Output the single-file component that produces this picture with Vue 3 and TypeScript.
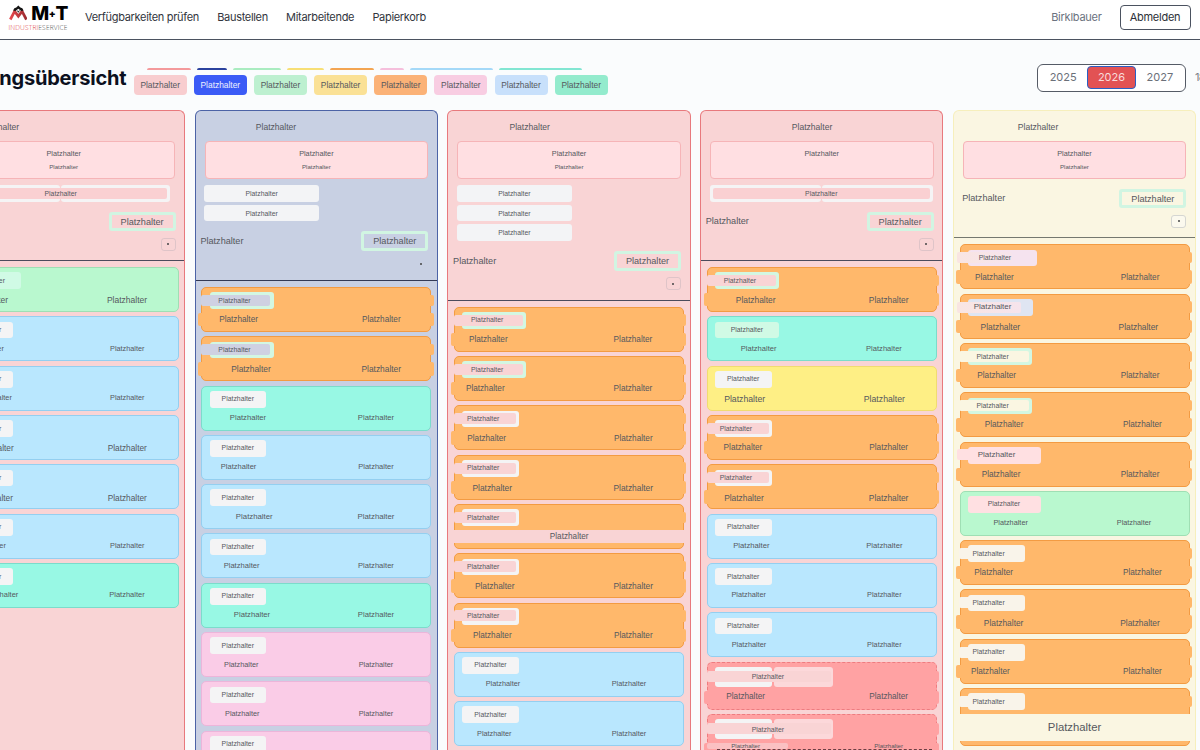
<script setup lang="ts">
interface Legend { tone: string; line: number }
interface Badge { tone: string; width: number; text: number; size?: number; patch?: string; patchEnd?: number; patchStart?: number }
interface Card {
  tone: string
  badge: Badge
  left?: number
  leftSize?: number
  right?: number
  rightSize?: number
  band?: number
}
interface Column {
  tone: string
  title: number
  subtitle: boolean
  slots: number
  wide?: number
  labelX: number
  cards: Card[]
}

const word = 'Platzhalter'
const navigation = ['Verfügbarkeiten prüfen', 'Baustellen', 'Mitarbeitende', 'Papierkorb']

const legend: Legend[] = [
  { tone: 'rose', line: 44.5 },
  { tone: 'royal', line: 30 },
  { tone: 'mint', line: 48 },
  { tone: 'sun', line: 37 },
  { tone: 'amber', line: 43.7 },
  { tone: 'candy', line: 24 },
  { tone: 'sky', line: 83.3 },
  { tone: 'aqua', line: 83.2 },
]

const plain = (): Badge => ({ tone: 'gray', width: 56.4, text: 36.3 })
const mintPlain = (): Badge => ({ tone: 'mintsoft', width: 64, text: 40 })
const mintCut = (text = 33): Badge => ({ tone: 'mint', width: 64, text, patch: 'base', patchEnd: 69 })
const grayCut = (): Badge => ({ tone: 'gray', width: 56.4, text: 29, patch: 'base', patchEnd: 62 })
const creamCut = (): Badge => ({ tone: 'ivory', width: 57, text: 29, patch: 'ivory', patchEnd: 30 })

const card = (tone: string, badge: Badge, left: number, leftSize: number, right: number, rightSize = leftSize): Card =>
  ({ tone, badge, left, leftSize, right, rightSize })

const columns: Column[] = [
  {
    tone: 'red', title: 57, subtitle: true, slots: 0, wide: 218, labelX: 6,
    cards: [
      card('green', mintPlain(), 39.4, 8.5, 178.4),
      card('blue', plain(), 38, 7.3, 178.7),
      card('blue', plain(), 46, 7.3, 178.7),
      card('blue', plain(), 45.5, 8.3, 178.7),
      card('blue', plain(), 44.8, 8.3, 178.7),
      card('blue', plain(), 40, 7.3, 178.7),
      card('teal', plain(), 52, 7.5, 178.4),
    ],
  },
  {
    tone: 'navy', title: 81.3, subtitle: true, slots: 2, labelX: 6,
    cards: [
      card('orange', mintCut(), 37.3, 8.2, 180),
      card('orange', mintCut(), 49.7, 8.4, 180),
      card('teal', plain(), 46.7, 7.7, 174.7),
      card('blue', plain(), 37.3, 7.5, 174.7),
      card('blue', plain(), 53, 7.8, 174.7),
      card('blue', plain(), 40.3, 7.6, 174.7),
      card('teal', plain(), 50.7, 7.7, 174.7),
      card('pink', plain(), 40, 7.3, 174.7),
      card('pink', plain(), 41, 7.3, 174.7),
      card('pink', plain(), 41, 7.3, 174.7),
    ],
  },
  {
    tone: 'red', title: 82.3, subtitle: true, slots: 3, labelX: 6,
    cards: [
      card('orange', mintCut(), 34.3, 8.2, 179),
      card('orange', mintCut(), 31.3, 8.2, 179),
      card('orange', grayCut(), 32.7, 8.2, 179.3),
      card('orange', grayCut(), 38.3, 8.4, 179.3),
      { tone: 'orange', badge: grayCut(), band: 8.2 },
      card('orange', grayCut(), 40.7, 8.4, 179.3),
      card('orange', grayCut(), 38.3, 8.2, 179.3),
      card('blue', plain(), 49, 7.3, 175),
      card('blue', plain(), 40.3, 7.3, 175),
    ],
  },
  {
    tone: 'red', title: 112, subtitle: false, slots: 0, wide: 223, labelX: 6,
    cards: [
      card('orange', mintCut(), 49, 8.4, 182),
      card('teal', mintPlain(), 52, 7.6, 177.3),
      card('yellow', plain(), 38, 8.7, 177.7),
      card('orange', grayCut(), 36.3, 8.2, 182),
      card('orange', grayCut(), 37.3, 8.4, 182),
      card('blue', plain(), 44.7, 7.7, 177.7),
      card('blue', plain(), 42, 7.3, 177.7),
      card('blue', plain(), 42.3, 7.3, 177.7),
      card('coral', { tone: 'gray', width: 56.7, text: 61, patch: 'base', patchEnd: 124 }, 39, 8.2, 182),
      card('coral', { tone: 'gray', width: 56.7, text: 61, patch: 'base', patchEnd: 124 }, 39, 6.1, 182),
    ],
  },
  {
    tone: 'cream', title: 85.3, subtitle: true, slots: 0, labelX: 9.7,
    cards: [
      card('orange', { tone: 'lilac', width: 69, text: 35.3, patch: 'blush', patchStart: -3, patchEnd: 52 }, 35, 8.2, 180.7),
      card('orange', { tone: 'ice', width: 65, text: 33, size: 8, patch: 'blush', patchStart: -3, patchEnd: 61 }, 41, 8.4, 179),
      card('orange', mintCut(), 37.3, 8.2, 180.7),
      card('orange', mintCut(), 44.7, 8.2, 183),
      card('orange', { tone: 'rosy', width: 73, text: 37, size: 8, patch: 'rosy', patchStart: -3, patchEnd: 30 }, 41.7, 8.2, 180.7),
      card('green', { tone: 'rosy', width: 73, text: 44.3 }, 51.3, 7.3, 174.7),
      card('orange', creamCut(), 34.3, 8.2, 183),
      card('orange', creamCut(), 44.3, 8.4, 180.7),
      card('orange', creamCut(), 31, 8.2, 183),
      { tone: 'orange', badge: creamCut(), band: 11.3 },
    ],
  },
]

const px = (value: number): string => `${value}px`
const isTall = (item: Card): boolean => (item.band ?? 0) > 10
const hasTabs = (item: Card): boolean => item.tone === 'orange' || item.tone === 'coral'
const badgeText = (badge: Badge) => ({ marginLeft: px(badge.text - 39.3), fontSize: px(badge.size ?? 6.85) })
const patchBox = (badge: Badge) => ({
  left: px((badge.patchStart ?? -0.3) - 1),
  width: px((badge.patchEnd ?? 0) - (badge.patchStart ?? -0.3)),
})
const leftText = (item: Card) => ({ marginLeft: px((item.left ?? 0) - 31.2), fontSize: px(item.leftSize ?? 8) })
const rightText = (item: Card) => ({
  marginLeft: px((item.right ?? 0) - (item.left ?? 0) - 60),
  fontSize: px(item.rightSize ?? 8),
})
</script>

<template>
  <div class="page">
    <header class="topbar">
      <div class="brand">
        <div class="brand-main">
          <svg class="mark" viewBox="0 0 20 16" preserveAspectRatio="none" aria-hidden="true">
            <defs>
              <linearGradient id="roof" x1="0" y1="0" x2="1" y2="0">
                <stop offset="0" stop-color="#e5484d" />
                <stop offset="1" stop-color="#9c2b30" />
              </linearGradient>
            </defs>
            <path d="M1.4 15 L6 6.6 L10 11.6 L14 6.6 L18.6 15" fill="none" stroke="url(#roof)" stroke-width="2.9" />
            <path d="M4.4 5.6 Q5.4 2.9 7.8 2.6 L10 .4 L12.2 2.6 Q14.6 2.9 15.6 5.6 L13.2 6.2 L10 3.8 L6.8 6.2 Z" fill="#151515" />
            <path d="M7.8 5.2 L10 7.9 L12.2 5.2 L10 6.2 Z" fill="#333" />
          </svg>
          <span class="brand-name">M<i>+</i>T</span>
        </div>
        <div class="brand-sub"><span>INDUSTRI</span>ESERVICE</div>
      </div>
      <nav class="nav">
        <a v-for="entry in navigation" :key="entry">{{ entry }}</a>
      </nav>
      <span class="user">Birklbauer</span>
      <button class="logout">Abmelden</button>
    </header>

    <section class="toolbar">
      <h1><span>Planungsübersicht</span></h1>
      <div class="legend">
        <div class="lines">
          <span v-for="entry in legend" :key="entry.tone" :class="['line', entry.tone]" :style="{ width: px(entry.line) }" />
        </div>
        <div class="pills">
          <span v-for="entry in legend" :key="entry.tone" :class="['pill', entry.tone]">{{ word }}</span>
        </div>
      </div>
      <div class="years">
        <span>2025</span><span class="active">2026</span><span>2027</span>
      </div>
      <span class="week">18</span>
    </section>

    <main class="board">
      <section v-for="(column, index) in columns" :key="index" :class="['column', column.tone]">
        <header class="column-head">
          <div class="title-row"><span :style="{ marginLeft: px(column.title - 31) }">{{ word }}</span></div>
          <div class="notice">
            <span>{{ word }}</span>
            <small v-if="column.subtitle">{{ word }}</small>
          </div>
          <div v-if="column.slots" class="slots">
            <span v-for="slot in column.slots" :key="slot" class="slot">{{ word }}</span>
          </div>
          <div v-if="column.wide" class="pair" :style="{ width: px(column.wide) }">
            <span /><span />
            <div class="pair-label">{{ word }}</div>
          </div>
          <div class="summary" :style="{ paddingLeft: px(column.labelX - 1.3) }">
            <span>{{ word }}</span>
            <span class="count">{{ word }}</span>
          </div>
          <button class="toggle"><i /></button>
        </header>

        <div class="cards">
          <article v-for="(item, n) in column.cards" :key="n" :class="['card', item.tone, { tall: isTall(item) }]">
            <template v-if="hasTabs(item)">
              <i class="tab upper" />
              <i v-if="!item.band" class="tab lower" />
            </template>
            <div class="badges">
              <div :class="['badge', item.badge.tone]" :style="{ width: px(item.badge.width) }" />
              <div v-if="item.tone === 'coral'" class="badge second" />
            </div>
            <i v-if="item.badge.patch" :class="['patch', item.badge.patch]" :style="patchBox(item.badge)" />
            <span class="badge-text"><b :style="badgeText(item.badge)">{{ word }}</b></span>
            <div v-if="item.band" class="band" :style="{ fontSize: px(item.band) }">{{ word }}</div>
            <div v-else :class="['texts', { compact: (item.leftSize ?? 8) < 8, clipped: item.leftSize === 6.1 }]">
              <span :style="leftText(item)">{{ word }}</span>
              <span :style="rightText(item)">{{ word }}</span>
            </div>
          </article>
        </div>
      </section>
    </main>
  </div>
</template>

<style>
html, body { margin: 0; overflow: hidden; }
</style>

<style scoped>
.page {
  width: 1200px;
  height: 750px;
  overflow: hidden;
  display: flex;
  flex-direction: column;
  background: #fafcfd;
  color: #55585e;
  font-family: "Liberation Sans", Arial, sans-serif;
}
.page * { box-sizing: border-box; }
button { font: inherit; padding: 0; }

.topbar {
  flex: none;
  height: 40px;
  padding: 0 9.5px 5px 8.5px;
  display: flex;
  align-items: center;
  background: #fff;
  border-bottom: 1.4px solid #4b5260;
  font-family: Inter, sans-serif;
  font-size: 11px;
  color: #31353d;
}
.brand { width: 59.5px; height: 26px; flex: none; margin-top: 2px; }
.brand-main { display: flex; height: 18.5px; align-items: flex-start; }
.mark { width: 19px; height: 15.5px; }
.brand-name { margin-left: 4px; font-size: 19px; line-height: 17px; height: 17px; font-weight: 800; color: #000; letter-spacing: -.3px; display: flex; }
.brand-name i { font-size: 10px; font-style: normal; line-height: 16px; font-weight: 900; }
.brand-sub { font: 300 6.6px/8px "Open Sans", sans-serif; color: #555; white-space: nowrap; letter-spacing: .17px; }
.brand-sub span { color: #dd4348; }
.nav { display: flex; gap: 18.2px; margin-left: 17px; flex: 1; letter-spacing: -.31px; }
.user { color: #6b7280; margin-right: 17.8px; letter-spacing: -.24px; }
.logout { width: 71px; height: 25px; border: 1px solid #4b5260; border-radius: 4px; background: #fff; color: #2c3038; letter-spacing: -.25px; }

.toolbar { flex: none; height: 70px; display: flex; align-items: flex-start; }
h1 { margin: 25px 0 0; width: 126.4px; flex: none; display: flex; justify-content: flex-end; color: #0b1020; font: 700 20px/26px Inter, sans-serif; letter-spacing: -.2px; }
.legend { margin: 28.3px 0 0 7.3px; }
.lines { display: flex; gap: 5.9px; padding-left: 13.3px; height: 7px; }
.line { height: 2px; border-radius: 2px 2px 0 0; }
.line.rose { background: #f49a9c; }
.line.royal { background: #2b429e; }
.line.mint { background: #a9ecc0; }
.line.sun { background: #f7df76; }
.line.amber { background: #f3a552; }
.line.candy { background: #f5bfdc; }
.line.sky { background: #a4d9f8; }
.line.aqua { background: #82e6d2; }
.pills { display: flex; gap: 7.15px; }
.pill { width: 53px; height: 19.3px; border-radius: 4px; font-size: 8.4px; line-height: 20.3px; text-align: center; }
.pill.rose { background: #f8cdcf; }
.pill.royal { background: #3b5bf6; color: #eef1ff; }
.pill.mint { background: #bdf0d0; }
.pill.sun { background: #fae196; }
.pill.amber { background: #fbb277; }
.pill.candy { background: #f8cde2; }
.pill.sky { background: #c8e0fb; }
.pill.aqua { background: #93ebcd; }
.years {
  margin: 24px 0 0 auto;
  width: 149px;
  height: 27.5px;
  padding: 1px;
  display: flex;
  align-items: center;
  border: 1.4px solid #555b66;
  border-radius: 6px;
  background: #fff;
  color: #6b7079;
  font: 11px/21px Inter, sans-serif;
}
.years span { width: 49px; text-align: center; }
.years .active { border: 1.4px solid #2a5fc4; border-radius: 4px; background: #e25254; color: #f8dcdc; }
.week { width: 5px; margin: 27px 0 0 9px; overflow: hidden; font: 11px/21px Inter, sans-serif; letter-spacing: -.8px; color: #7b808a; }

.board { flex: 1; display: flex; gap: 9.4px; margin-left: -58px; min-height: 0; }
.column { flex: none; width: 243.3px; border: 1px solid; border-bottom: 0; border-radius: 6px 6px 0 0; height: 660px; }
.column.red { --base: #f9d4d5; background: var(--base); border-color: #e8797d; }
.column.navy { --base: #c8d0e3; background: var(--base); border-color: #4c63a6; }
.column.cream { --base: #faf6e2; background: var(--base); border-color: #f6efbc; }
.column-head { padding: 10px 0 9.3px; border-bottom: 1.4px solid #4b4b5c; }
.column.navy .column-head { border-color: #333a55; }
.column.cream .column-head { border-color: #74786f; }
.title-row { height: 19.5px; font-size: 8.55px; line-height: 13.5px; }
.title-row span { display: block; width: 60px; text-align: center; }
.notice {
  width: 223.6px;
  height: 38.3px;
  margin-left: 8.9px;
  padding-top: 5px;
  display: flex;
  flex-direction: column;
  align-items: center;
  border: 1.5px solid #f6b4b7;
  border-radius: 4px;
  background: #ffdfe2;
  font-size: 7.3px;
  line-height: 13px;
}
.notice small { font-size: 6.1px; line-height: 13.8px; }
.slots { margin: 6px 0 0 8.7px; display: flex; flex-direction: column; gap: 3px; }
.slot { width: 114.5px; height: 16.8px; border-radius: 3px; background: #f3f4f6; font-size: 6.85px; line-height: 17px; text-align: center; }
.pair { position: relative; margin: 6px 0 0 8.7px; height: 16.8px; display: flex; gap: 1px; }
.pair > span { flex: 1; border-radius: 3px; background: #f5f4f5; }
.pair-label { position: absolute; inset: 2.8px 3px; border-radius: 2px; background: #fad0d2; font-size: 6.85px; line-height: 11.2px; text-align: center; }
.summary { margin-top: 10px; padding-right: 8.7px; height: 19.4px; display: flex; justify-content: space-between; align-items: center; font-size: 9.15px; }
.count { width: 67px; height: 19.4px; border: 3px solid #d1f5e2; border-radius: 3px; line-height: 14px; text-align: center; }
.toggle { display: flex; align-items: center; justify-content: center; width: 15px; height: 13px; margin: 6.7px 8.7px 0 auto; border: 1px solid rgba(130, 140, 155, .22); border-radius: 3px; background: transparent; }
.column.navy .toggle { border-color: transparent; }
.column.cream .toggle { border-color: #d5d6d2; background: #fbf9ee; }
.toggle i { width: 2px; height: 2px; background: #444; border-radius: 1px; }

.cards { display: flex; flex-direction: column; gap: 4.3px; padding: 6.2px 0 0 5.8px; }
.card { position: relative; flex: none; width: 230px; height: 45px; border: 1px solid var(--edge); border-radius: 5px; background: var(--fill); }
.card.orange { --fill: #ffb86b; --edge: #f39b42; }
.card.blue { --fill: #b9e7fe; --edge: #94cff0; }
.card.teal { --fill: #98f8e4; --edge: #7bdccb; }
.card.green { --fill: #b9f8cf; --edge: #9fdfb4; }
.card.pink { --fill: #facce7; --edge: #ecb5da; }
.card.yellow { --fill: #feef85; --edge: #f1dc70; }
.card.coral { --fill: #ffa2a3; --edge: #ee7c80; height: 48.3px; border-style: dashed; }
.card.tall { height: 58.3px; }
.badges { position: relative; display: flex; gap: 2.5px; padding: 4.3px 0 0 7.3px; }
.badge { height: 16.7px; border-radius: 3px; }
.coral .badge { height: 19.7px; }
.badge.gray { background: #f4f4f5; }
.badge.mint { background: #d3f7e2; }
.badge.mintsoft { background: #d0fae5; }
.badge.ivory, .patch.ivory { background: #f9f4ea; }
.badge.lilac { background: #f5e3ef; }
.badge.ice { background: #dfe5f2; }
.badge.rosy, .patch.rosy { background: #ffe0e2; }
.badge.second { width: 59px; background: #fcd8da; }
.patch { position: absolute; top: 6.9px; height: 11px; border-radius: 2px; }
.patch.base { background: var(--base); }
.navy .patch.base { background: #cfd1e2; }
.patch.blush { background: linear-gradient(90deg, #f9e5e2, #f6e4ec); }
.coral .patch { top: 8.3px; }
.badge-text { position: absolute; inset: 4.6px auto auto 0; width: 130px; line-height: 16.7px; font-size: 6.85px; }
.badge-text b { display: block; width: 78.6px; text-align: center; font-weight: 400; position: relative; left: -1px; }
.coral .badge-text { line-height: 19.7px; }
.tab { position: absolute; left: 0; right: -3.3px; background: var(--fill); border-radius: 2px; }
.tab.upper { top: 6.7px; height: 11.3px; }
.tab.lower { top: 25px; height: 13.3px; left: -4.3px; }
.coral .tab.upper { top: 8.3px; }
.coral .tab.lower { top: 28.3px; }
.texts { position: relative; display: flex; margin-top: 5.2px; line-height: 12px; }
.texts.compact { margin-top: 4.5px; }
.coral .texts { margin-top: 4.9px; }
.coral .texts.clipped { margin-top: .6px; }
.clipped::before { content: ""; position: absolute; left: -1px; top: 3px; width: 81px; height: 6.5px; border-radius: 2px; background: #fbc1c3; }
.clipped::after { content: ""; position: absolute; left: 9px; top: 9.6px; width: 215px; border-top: 1px dashed #6d3f44; }
.texts span { position: relative; flex: none; width: 60px; text-align: center; }
.band { position: absolute; left: -1px; right: -1px; top: 24.9px; height: 13.4px; line-height: 14.4px; text-align: center; background: var(--base); }
.tall .band { height: 26.7px; line-height: 27px; }
</style>
